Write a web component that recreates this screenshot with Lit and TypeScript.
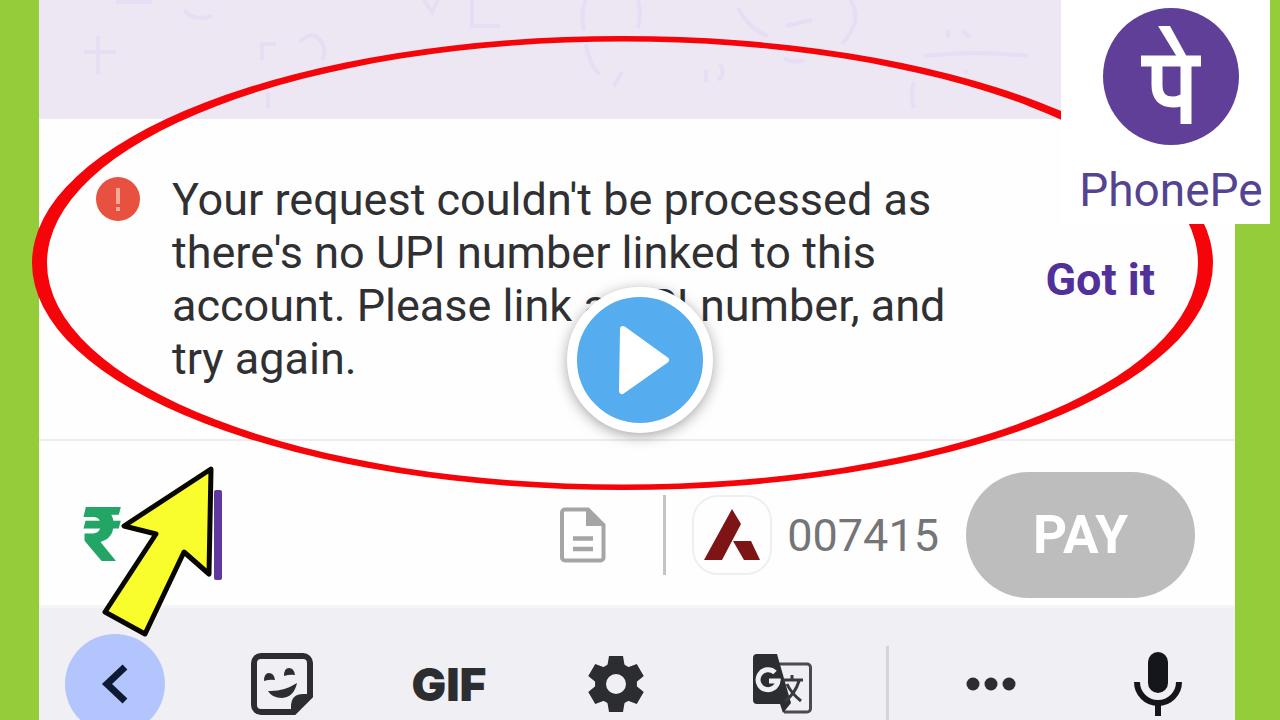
import { LitElement, html, css } from "lit";
import { customElement, state } from "lit/decorators.js";

@customElement("app-root")
export class AppRoot extends LitElement {
  @state() private amount = "";

  static styles = css`
    :host {
      display: block;
      font-family: Roboto, "Noto Sans", sans-serif;
    }
    * {
      box-sizing: border-box;
    }
    button {
      border: 0;
      padding: 0;
      margin: 0;
      background: none;
      font: inherit;
      color: inherit;
      cursor: pointer;
    }
    svg {
      display: block;
    }
    .stage {
      position: relative;
      height: 100vh;
      overflow: hidden;
      padding: 0 45px 0 39px;
      background: #94cd39;
    }
    .phone {
      display: flex;
      flex-direction: column;
      min-height: 100%;
      background: #fefefe;
    }
    .chat {
      height: 119px;
      background: #ede7f4;
      overflow: hidden;
    }
    .notice {
      display: flex;
      align-items: center;
      gap: 32px;
      padding: 54px 80px 54px 57px;
      border-bottom: 2px solid #ededee;
    }
    .alert {
      flex: none;
      align-self: flex-start;
      margin-top: 4px;
    }
    .message {
      flex: 1;
      margin: 0;
      padding-right: 48px;
      font-size: 45px;
      line-height: 53px;
      color: #303033;
    }
    .got {
      font-size: 45px;
      font-weight: 700;
      color: #52309a;
    }
    .entry {
      display: flex;
      align-items: center;
      padding: 31px 40px 7px 43px;
    }
    .rupee {
      font-size: 76px;
      line-height: 80px;
      font-weight: 900;
      color: #22a565;
    }
    .amount {
      width: 92px;
      border: 0;
      padding: 0;
      outline: 0;
      background: transparent;
      font: 45px Roboto, sans-serif;
      color: #303033;
    }
    .caret {
      width: 8px;
      height: 90px;
      border-radius: 2px;
      background: #5e3aa0;
    }
    .tools {
      display: flex;
      align-items: center;
      margin-left: auto;
    }
    .rule {
      width: 3px;
      height: 80px;
      margin: 0 26px 0 57px;
      background: #c4c4c6;
    }
    .bank {
      display: flex;
      align-items: center;
      gap: 15px;
      margin-right: 27px;
      font-size: 45px;
      color: #757578;
    }
    .tile {
      display: grid;
      place-items: center;
      width: 80px;
      height: 80px;
      border: 2px solid #f0eeef;
      border-radius: 26px;
    }
    .pay {
      width: 229px;
      height: 126px;
      border-radius: 63px;
      background: #bdbdbd;
      color: #fff;
      font-size: 53px;
      font-weight: 700;
    }
    .keys {
      flex: 1;
      display: flex;
      align-items: flex-start;
      justify-content: space-between;
      padding: 26px 27px 0 26px;
      border-top: 3px solid #f5f5f7;
      background: #efeff4;
      color: #2c2d30;
    }
    .group {
      display: flex;
      gap: 67px;
    }
    .key {
      display: grid;
      place-items: center;
      width: 100px;
      height: 100px;
      border-radius: 50px;
    }
    .back {
      background: #b3c5fd;
    }
    .gif {
      font-family: Inter, sans-serif;
      font-size: 46px;
      font-weight: 900;
    }
    .split {
      width: 3px;
      height: 100px;
      margin-top: 12px;
      background: #d4d4d9;
    }
    .marks {
      position: absolute;
      inset: 0;
      width: 100%;
      height: 100%;
      pointer-events: none;
    }
    .brand {
      position: absolute;
      top: 0;
      right: 10px;
      width: 209px;
      height: 224px;
      padding: 8px 0 0 11px;
      display: flex;
      flex-direction: column;
      align-items: center;
      gap: 18px;
      background: #fff;
      color: #544391;
      font-size: 46px;
      line-height: 54px;
    }
    .play {
      position: absolute;
      top: 50%;
      left: 50%;
      display: grid;
      place-items: center;
      width: 146px;
      height: 146px;
      margin: -73px 0 0 -73px;
      border: 10px solid #fff;
      border-radius: 50%;
      background: #55acee;
      box-shadow: 0 3px 14px rgba(0, 0, 0, 0.35);
    }
  `;

  private onAmount(e: Event) {
    this.amount = (e.target as HTMLInputElement).value;
  }

  render() {
    return html`
      <div class="stage">
        <main class="phone">
          <div class="chat">
            <svg width="1022" height="118" viewBox="39 0 1022 118" fill="none" stroke="#e6dcf6" stroke-width="4" opacity="0.8" aria-hidden="true">
              <path d="M84 52h32M98 36v38M116 2h36M184 10q10 12 28 6M262 60v-16h14M300 42q12-12 20-2t2 20M268 108v-16M424 0l8 12 6-12M472 0v26h28M584 30q-4-16 2-30M638 28q4-14 0-28M586 44q4 24 14 30M614 86l8-14M706 70v12M720 64q6 10-2 16" />
              <path d="M738 8q12 22 30 28M786 26l26-6M850 0q14 20-8 44M784 58q10 6 20 2M948 38v-8M962 30l8 8M924 56q50-6 104 0M966 70v4M914 108q-4-12 0-26" />
            </svg>
          </div>
          <section class="notice" role="alert">
            <svg class="alert" width="44" height="44" viewBox="0 0 44 44" aria-hidden="true">
              <circle cx="22" cy="22" r="22" fill="#e8503f" />
              <path d="M22 11v16M22 30v4" stroke="#f8a896" stroke-width="4" />
            </svg>
            <p class="message">
              Your request couldn't be processed as there's no UPI number linked to this account. Please link a UPI number, and try again.
            </p>
            <button class="got">Got it</button>
          </section>
          <section class="entry">
            <label class="rupee" for="amount">₹</label>
            <input class="amount" id="amount" aria-label="Amount in rupees" inputmode="decimal" .value=${this.amount} @input=${this.onAmount} />
            <span class="caret"></span>
            <div class="tools">
              <button aria-label="Add note">
                <svg width="46" height="56" viewBox="0 0 46 56">
                  <path d="M5 2.500h23l15.500 15.500v32.500a3 3 0 0 1-3 3H5a3 3 0 0 1-3-3V5.500a3 3 0 0 1 3-3z" fill="none" stroke="#a5a5a7" stroke-width="4" />
                  <path d="M26 2v17h18z" fill="#a5a5a7" />
                  <path d="M13 31.500h20M13 42h20" stroke="#a5a5a7" stroke-width="4.500" />
                </svg>
              </button>
              <span class="rule"></span>
              <button class="bank">
                <span class="tile">
                  <svg width="56" height="52" viewBox="0 0 56 52" fill="#7d1416">
                    <path d="M28 0l9 15L18 51H0zM29 32h18l9 19H40z" />
                  </svg>
                </span>
                007415
              </button>
              <button class="pay">PAY</button>
            </div>
          </section>
          <nav class="keys" aria-label="Keyboard tools">
            <div class="group">
              <button class="key back" aria-label="Back">
                <svg width="28" height="40" viewBox="0 0 28 40"><path d="M24 3L6 20l18 17" fill="none" stroke="#0e1a33" stroke-width="7" /></svg>
              </button>
              <button class="key" aria-label="Stickers">
                <svg width="62" height="62" viewBox="0 0 62 62">
                  <path d="M10 3h42a7 7 0 0 1 7 7v33L43 59H10a7 7 0 0 1-7-7V10a7 7 0 0 1 7-7z" fill="none" stroke="#2c2d30" stroke-width="6" />
                  <path d="M40 60V52q1-11 12-11h9z" fill="#2c2d30" />
                  <path d="M17 38q15 1 29-8-3 14-15 15-10 0-14-7z" fill="#2c2d30" />
                  <path d="M13 28q0-8 5-8t6 7q-5-1-11 1zM33 23q0-8 5-8t6 7q-5-1-11 1z" fill="#2c2d30" />
                </svg>
              </button>
              <button class="key gif">GIF</button>
              <button class="key" aria-label="Settings">
                <svg width="56" height="56" viewBox="-28 -28 56 56" fill="#2c2d30">
                  <path d="M-7-28H7l2 12H-9zM-7 28H7l2-12H-9z" />
                  <path d="M-7-28H7l2 12H-9zM-7 28H7l2-12H-9z" transform="rotate(60)" />
                  <path d="M-7-28H7l2 12H-9zM-7 28H7l2-12H-9z" transform="rotate(120)" />
                  <circle r="15.500" fill="none" stroke="#2c2d30" stroke-width="11" />
                </svg>
              </button>
              <button class="key" aria-label="Translate">
                <svg width="60" height="60" viewBox="0 0 60 60" fill="none">
                  <path d="M26 10h28a3.500 3.500 0 0 1 3.500 3.500v41A3.500 3.500 0 0 1 54 58H31" stroke="#4a4b4e" stroke-width="3" />
                  <path d="M4 0h20l14 49-8 10-3-9H4a4 4 0 0 1-4-4V4a4 4 0 0 1 4-4z" fill="#2c2d30" />
                  <path d="M22 18.500a10 10 0 1 0 3 8.500h-9" stroke="#efeff4" stroke-width="5" />
                  <path d="M30 26h20M39 21v5M46 27q-4 13-14 20M34 30q4 9 14 17" stroke="#3a3b3e" stroke-width="3" />
                </svg>
              </button>
            </div>
            <span class="split"></span>
            <div class="group">
              <button class="key" aria-label="More">
                <svg width="50" height="14" viewBox="0 0 50 14" fill="#2c2d30"><circle cx="7" cy="7" r="6.500" /><circle cx="25" cy="7" r="6.500" /><circle cx="43" cy="7" r="6.500" /></svg>
              </button>
              <button class="key" aria-label="Voice input">
                <svg width="48" height="64" viewBox="0 0 48 64">
                  <rect x="14" y="0" width="20" height="41" rx="10" fill="#15161b" />
                  <path d="M3 30a21 21 0 0 0 42 0M24 51v13" fill="none" stroke="#15161b" stroke-width="6" />
                </svg>
              </button>
            </div>
          </nav>
        </main>

        <svg class="marks" viewBox="0 0 1280 720" preserveAspectRatio="none" aria-hidden="true">
          <path fill="#f5040a" fill-rule="evenodd" d="M32 263a590.500 227 0 1 1 1181 0a590.500 227 0 1 1-1181 0zM47 263a575.500 221.500 0 1 0 1151 0a575.500 221.500 0 1 0-1151 0z" />
          <path d="M211 469L124 526l32 8L105 612l40 22 39-82 25 22z" fill="#fafd2c" stroke="#080600" stroke-width="5" stroke-linejoin="round" />
        </svg>

        <aside class="brand">
          <svg width="136" height="137" viewBox="0 0 136 137" role="img" aria-label="PhonePe logo">
            <ellipse cx="68" cy="68.500" rx="68" ry="68.500" fill="#5f3f98" />
            <path d="M38 53h60M83 53v63M54 53v24q0 17 16 17 8 0 13-5" fill="none" stroke="#fff" stroke-width="11" />
            <path d="M55 18h12l17 31h-10z" fill="#fff" />
          </svg>
          <span>PhonePe</span>
        </aside>

        <button class="play" aria-label="Play">
          <svg width="60" height="72" viewBox="0 0 60 72"><path d="M13 5L56 36 12 67z" fill="#fff" stroke="#fff" stroke-width="6" stroke-linejoin="round" /></svg>
        </button>
      </div>
    `;
  }
}
